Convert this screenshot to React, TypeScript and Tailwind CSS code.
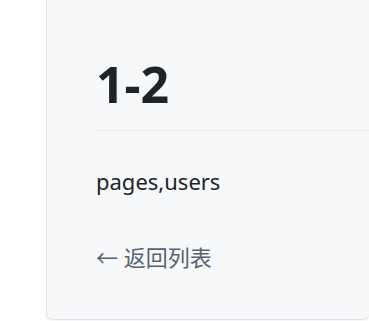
export default function App() {
  return (
    <div
      className="min-h-[321px] bg-white pl-[46px] pb-[1px]"
      style={{ fontFamily: '"Noto Sans", "Noto Sans CJK SC", sans-serif' }}
    >
      <div className="rounded-b-md border border-t-0 border-r-0 border-[#e1e4e8] bg-[#f6f8fa] pl-[49px] pt-[53px] pb-[45px] shadow-[0_1px_2px_rgba(0,0,0,0.04)]">
        <h1 className="border-b border-[#e8eaed] pb-[14px] text-[50px] font-bold leading-[1.25] text-[#1f2328]">
          1-2
        </h1>
        <p className="mt-[34px] h-[33px] text-[22px] leading-[33px] text-[#1f2328]">pages,users</p>
        <a href="#" className="mt-[42px] block h-[34px] text-[22px] leading-[34px] text-[#59636e]">
          ← 返回列表
        </a>
      </div>
    </div>
  );
}
